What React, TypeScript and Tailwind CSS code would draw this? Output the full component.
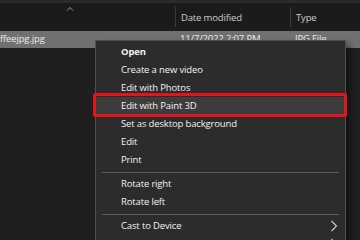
import React from "react";

type Item = { label: string; bold?: boolean; sub?: boolean; active?: boolean } | "sep";

const items: Item[] = [
  { label: "Open", bold: true },
  { label: "Create a new video" },
  { label: "Edit with Photos" },
  { label: "Edit with Paint 3D", active: true },
  { label: "Set as desktop background" },
  { label: "Edit" },
  { label: "Print" },
  "sep",
  { label: "Rotate right" },
  { label: "Rotate left" },
  "sep",
  { label: "Cast to Device", sub: true },
  { label: "", sub: true },
];

const Chevron = () => (
  <svg width="8" height="12" viewBox="0 0 8 12" className="absolute right-[7px] top-[3px]">
    <path d="M1.5 1 L6.5 6 L1.5 11" fill="none" stroke="#cfcfcf" strokeWidth="1.1" />
  </svg>
);

const App: React.FC = () => {
  return (
    <div
      className="relative w-[360px] h-[240px] overflow-hidden bg-[#1f1f1f] text-[9.5px] tracking-[-0.15px]"
      style={{ fontFamily: '"Open Sans", "Noto Sans", sans-serif' }}
    >
      {/* column header */}
      <div className="h-[3px] bg-[#2a2a2a]" />
      <div className="relative flex h-[28px] items-center bg-[#1b1b1b] text-[#cdcdcd]">
        <div className="relative w-[175px] h-full">
          <svg width="8" height="5" viewBox="0 0 8 5" className="absolute left-[66px] top-[3px]">
            <path d="M1 4.5 L4 1.5 L7 4.5" fill="none" stroke="#9a9a9a" strokeWidth="1" />
          </svg>
        </div>
        <div className="w-px h-[20px] bg-[#3c3c3c]" />
        <div className="w-[114px] pl-[5px] pt-[2px]">Date modified</div>
        <div className="w-px h-[20px] bg-[#3c3c3c]" />
        <div className="pl-[5px] pt-[2px]">Type</div>
      </div>

      {/* selected file row */}
      <div className="flex h-[17px] items-center bg-[#707070] text-[#ececec]">
        <div className="w-[176px]">ffeejpg.jpg</div>
        <div className="w-[115px] pl-[4px]">11/7/2022 2:07 PM</div>
        <div className="pl-[4px]">JPG File</div>
      </div>

      {/* context menu */}
      <div className="absolute left-[95px] top-[40px] w-[251px] h-[220px] border border-[#505050] bg-[#2c2c2c] pt-[2px] text-[#f2f2f2] shadow-[4px_4px_6px_rgba(0,0,0,0.45)]">
        {items.map((it, i) =>
          it === "sep" ? (
            <div key={i} className="py-[2.5px] px-[6px]">
              <div className="h-px bg-[#5a5a5a]" />
            </div>
          ) : (
            <div
              key={i}
              className={`relative flex h-[18px] items-center pl-[25px] ${it.active ? "bg-[#3d3d3d]" : ""} ${it.bold ? "font-bold" : ""}`}
            >
              {it.label}
              {it.sub && <Chevron />}
            </div>
          )
        )}
      </div>

      {/* red annotation box */}
      <div className="absolute left-[93px] top-[93px] w-[254px] h-[24px] rounded-[2px] border-[3px] border-[#e3141b]" />
    </div>
  );
};

export default App;
